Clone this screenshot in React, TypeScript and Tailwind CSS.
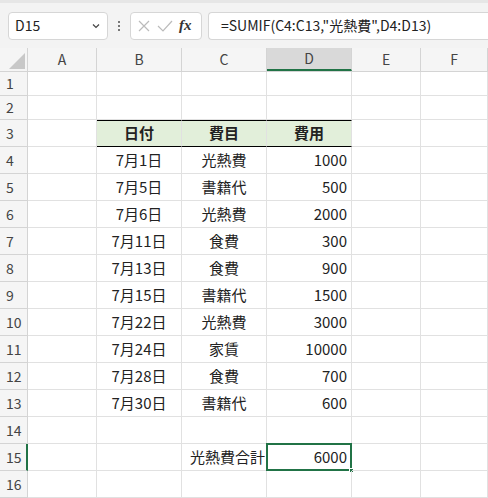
import React from "react";

const cols = [
  { l: "A", w: 69 },
  { l: "B", w: 85 },
  { l: "C", w: 85 },
  { l: "D", w: 85 },
  { l: "E", w: 69 },
  { l: "F", w: 67 },
];

const data: [string, string, string][] = [
  ["7月1日", "光熱費", "1000"],
  ["7月5日", "書籍代", "500"],
  ["7月6日", "光熱費", "2000"],
  ["7月11日", "食費", "300"],
  ["7月13日", "食費", "900"],
  ["7月15日", "書籍代", "1500"],
  ["7月22日", "光熱費", "3000"],
  ["7月24日", "家賃", "10000"],
  ["7月28日", "食費", "700"],
  ["7月30日", "書籍代", "600"],
];

const font = { fontFamily: '"Noto Sans CJK JP", "Noto Sans", sans-serif' };

export default function App() {
  const rows: { h: number; cells: React.ReactNode[]; header?: boolean }[] = [];
  rows.push({ h: 24, cells: [] });
  rows.push({ h: 24, cells: [] });
  rows.push({ h: 27, cells: [null, "日付", "費目", "費用"], header: true });
  data.forEach((d) => rows.push({ h: 27, cells: [null, d[0], d[1], d[2]] }));
  rows.push({ h: 27, cells: [] });
  rows.push({ h: 27, cells: [null, null, "光熱費合計", "6000"] });
  rows.push({ h: 27, cells: [] });

  return (
    <div className="w-[488px] h-[498px] overflow-hidden bg-white text-[#222]" style={font}>
      <div className="h-[48px] bg-[#f3f3f3] border-t-[3px] border-[#e6e6e6] flex items-center gap-0 pl-[8px]">
        <div className="w-[100px] h-[28px] bg-white border border-[#d6d6d6] rounded-[4px] flex items-center justify-between px-[6px] text-[14px]">
          <span>D15</span>
          <svg width="10" height="10" viewBox="0 0 10 10"><path d="M2 3.5 L5 6.5 L8 3.5" fill="none" stroke="#444" strokeWidth="1.2" /></svg>
        </div>
        <div className="w-[22px] flex flex-col items-center gap-[2px]">
          <div className="w-[2px] h-[2px] bg-[#777]" />
          <div className="w-[2px] h-[2px] bg-[#777]" />
          <div className="w-[2px] h-[2px] bg-[#777]" />
        </div>
        <div className="w-[72px] h-[28px] bg-white border border-[#d6d6d6] rounded-[4px] flex items-center px-[6px] gap-[6px]">
          <svg width="14" height="14" viewBox="0 0 14 14"><path d="M2 2 L12 12 M12 2 L2 12" stroke="#bbb" strokeWidth="1.2" /></svg>
          <svg width="16" height="14" viewBox="0 0 16 14"><path d="M1 7 L6 12 L15 2" fill="none" stroke="#bbb" strokeWidth="1.2" /></svg>
          <span className="italic font-bold text-[15px] text-[#333]" style={{ fontFamily: '"Liberation Serif", serif' }}>fx</span>
        </div>
        <div className="ml-[6px] flex-1 h-[28px] bg-white border border-[#d6d6d6] border-r-0 rounded-l-[4px] flex items-center pl-[12px] text-[14px]">
          =SUMIF(C4:C13,"光熱費",D4:D13)
        </div>
      </div>
      <div className="flex h-[24px] bg-[#f5f5f5] text-[14px] text-[#444] border-b border-[#d4d4d4]">
        <div className="w-[28px] relative border-r border-[#d4d4d4]">
          <svg className="absolute right-[2px] bottom-[2px]" width="16" height="16" viewBox="0 0 16 16"><path d="M16 0 L16 16 L0 16 Z" fill="#c8c8c8" /></svg>
        </div>
        {cols.map((c) => (
          <div
            key={c.l}
            style={{ width: c.w }}
            className={`flex items-center justify-center border-r border-[#d4d4d4] ${c.l === "D" ? "bg-[#d9d9d9] border-b-2 border-b-[#217346]" : ""}`}
          >
            {c.l}
          </div>
        ))}
      </div>
      {rows.map((r, i) => (
        <div key={i} className="flex text-[15px]" style={{ height: r.h }}>
          <div className={`w-[28px] bg-[#f5f5f5] border-r border-b border-[#d4d4d4] flex items-center justify-start pl-[6px] text-[14px] text-[#444] ${i === 14 ? "bg-[#d9d9d9] border-r-2 border-r-[#217346]" : ""}`}>
            {i + 1}
          </div>
          {cols.map((c, j) => {
            const v = r.cells[j];
            const inTable = j >= 1 && j <= 3;
            const isTotal = i === 14 && j === 3;
            let cls = "border-r border-b border-[#e1e1e1] flex items-center px-[4px] whitespace-nowrap ";
            if (r.header && inTable) cls += "bg-[#e2efda] font-bold justify-center border-t border-t-black border-b-black ";
            else if (j === 3) cls += "justify-end ";
            else if (i === 14 && j === 2) cls += "justify-end pr-[1px] ";
            else cls += "justify-center ";
            return (
              <div key={j} style={{ width: c.w }} className={`relative ${cls}`}>
                {v}
                {isTotal && (
                  <>
                    <div className="absolute -left-[1px] -top-[1px] right-[-1px] bottom-[-1px] border-2 border-[#217346]" />
                    <div className="absolute right-[-3px] bottom-[-3px] w-[5px] h-[5px] bg-[#217346] border border-white" />
                  </>
                )}
              </div>
            );
          })}
        </div>
      ))}
    </div>
  );
}
